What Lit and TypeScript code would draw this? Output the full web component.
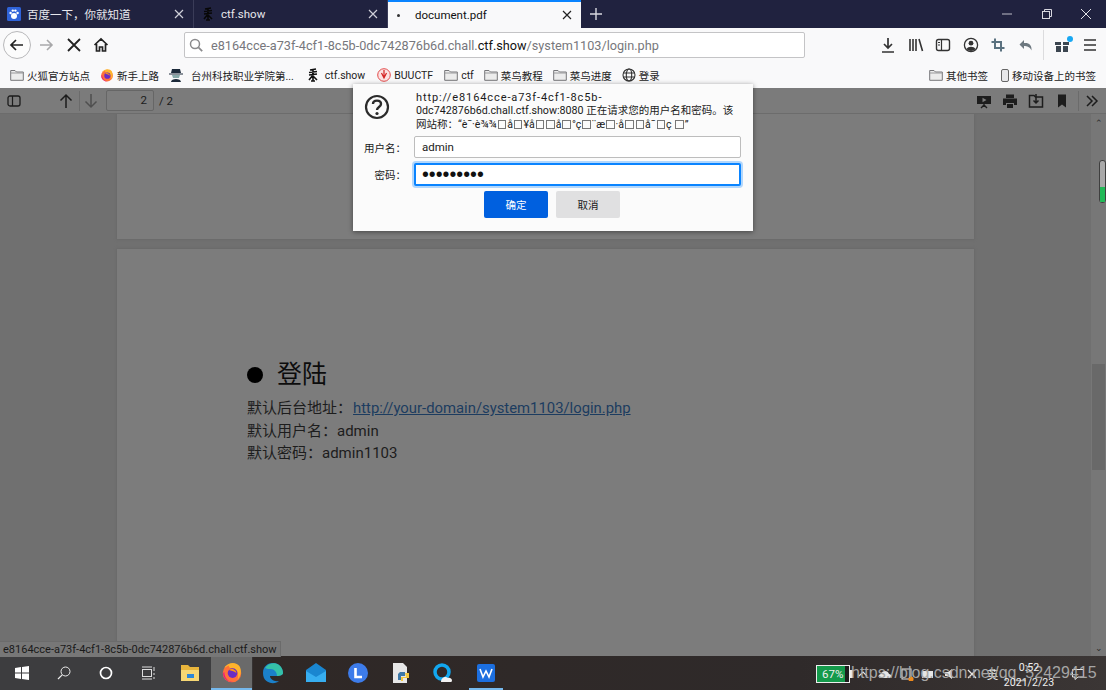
import { LitElement, html, css, svg } from "lit";
import { customElement } from "lit/decorators.js";

const ctfIcon = html`<svg class="ic14" viewBox="0 0 14 14"><path d="M4 2 L10 1 M3 4.5 L11 3.5 M3 7 L11 6 M7 1 V13 M7 7 L3 12 M7 8 L11 12 M5 13 L9 13" stroke="#111" stroke-width="1.6" fill="none"/></svg>`;

const folder = html`<svg class="ic14" viewBox="0 0 14 14"><path d="M.7 2.5 H5 L6.5 4 H13.3 V12.3 H.7 Z" fill="#ececec" stroke="#77777a"/><path d="M1 5 H13" stroke="#9a9a9c"/></svg>`;

const firefox = (size: string) => html`<svg class=${size} viewBox="0 0 20 20">
  <circle cx="10" cy="11" r="8.4" fill="#ff7139"/>
  <path d="M3 6 C6 1 14 0 17 5 C19 9 18 14 15 17 C17 11 14 7 11 7 C9 7 7 6 7 4 C5 5 4 6 3 6Z" fill="#ffb32c"/>
  <path d="M2 11 C2 17 7 19.5 11 19.2 C6 19 3 15 3 10Z" fill="#e31587"/>
  <circle cx="10.5" cy="11" r="4.4" fill="#6a2dc2"/>
  <path d="M7 8 C10 6 14 8 14 11 C12 9 9 9 7 8Z" fill="#ff980e"/>
</svg>`;

const globe = html`<svg class="ic14" viewBox="0 0 14 14" fill="none" stroke="#333" stroke-width="1.1"><circle cx="7" cy="7" r="6"/><ellipse cx="7" cy="7" rx="2.7" ry="6"/><path d="M1.3 5 H12.7 M1.3 9 H12.7"/></svg>`;

const closeIcon = (colour: string) => html`<svg class="ic14" viewBox="0 0 14 14"><path d="M3 3 L11 11 M11 3 L3 11" stroke=${colour} stroke-width="1.2"/></svg>`;

const bookmarks = [
  { icon: folder, text: "火狐官方站点", cls: "" },
  { icon: firefox("ic14"), text: "新手上路", cls: "" },
  {
    icon: html`<svg class="ic14" viewBox="0 0 14 14"><path d="M3 1 H11 L12 5 H2 Z M0 5.5 H14 V6.5 H0 Z" fill="#1c2a3a"/><path d="M3 7 H11 L10 10 H4 Z" fill="#8aa"/><path d="M2 14 C2 10 12 10 12 14 Z" fill="#1c2a3a"/></svg>`,
    text: "台州科技职业学院第...",
    cls: "spy",
  },
  { icon: ctfIcon, text: "ctf.show", cls: "ctf" },
  {
    icon: html`<svg class="ic14" viewBox="0 0 14 14"><circle cx="7" cy="7" r="6.3" fill="#fbe3e3" stroke="#e34b4b"/><path d="M7 2 V9 M4.5 5 L7 10 L9.5 5" stroke="#d42222" stroke-width="1.2" fill="none"/></svg>`,
    text: "BUUCTF",
    cls: "buu",
  },
  { icon: folder, text: "ctf", cls: "" },
  { icon: folder, text: "菜鸟教程", cls: "" },
  { icon: folder, text: "菜鸟进度", cls: "" },
  { icon: globe, text: "登录", cls: "" },
];

const navRight = [
  svg`<path d="M9 2 V12 M5 8 L9 12 L13 8 M3 16 H15" stroke="#333" stroke-width="1.7" fill="none"/>`,
  svg`<path d="M3 3 V15 M6 3 V15 M9 3 V15 M12 3 L15.5 15" stroke="#333" stroke-width="1.6" fill="none"/>`,
  svg`<rect x="2.5" y="3.5" width="13" height="11" rx="2" stroke="#333" stroke-width="1.4" fill="none"/><path d="M7.5 3.5 V14.5 M4 6.5 H6 M4 9 H6" stroke="#333" stroke-width="1.2"/>`,
  svg`<circle cx="9" cy="9" r="6.6" stroke="#333" stroke-width="1.3" fill="none"/><circle cx="9" cy="7.2" r="2.4" fill="#333"/><path d="M4.6 13 C6 10 12 10 13.4 13 C12 15.5 6 15.5 4.6 13Z" fill="#333"/>`,
  svg`<path d="M6 2.5 V12 H15.5 M2.5 6 H12 V15.5" stroke="#5b7280" stroke-width="2" fill="none"/>`,
  svg`<path d="M7 4 L2.5 8.5 L7 13 V10 C10 10 13 11 14.5 14.5 C15 9 12 6.5 7 7Z" fill="#6d7880"/>`,
];

const pdfRight = [
  svg`<path d="M1 3 H15 V11 H1 Z" fill="#1d1d1d"/><path d="M6.5 4.7 L10.5 7 L6.5 9.3Z" fill="#7c7c7c"/><path d="M8 11 V14 M5 15 L8 12 L11 15" stroke="#1d1d1d" stroke-width="1.4" fill="none"/>`,
  svg`<path d="M4 1.5 H12 V5 H4 Z M1 5.5 H15 V12 H12 V10 H4 V12 H1 Z M5 11 H11 V15 H5 Z" fill="#1d1d1d"/>`,
  svg`<path d="M1.5 2.5 H6 L7.5 4 H14.5 V14 H1.5 Z" stroke="#1d1d1d" stroke-width="1.5" fill="none"/><path d="M8 1 V10 M5.5 7.5 L8 10 L10.5 7.5" stroke="#1d1d1d" stroke-width="1.5" fill="none"/>`,
  svg`<path d="M4 1.5 H12 V14.5 L8 11.5 L4 14.5Z" fill="#1d1d1d"/>`,
];

const garbled = "“è¯·è¾¾|å|¥å||å|°ç|¨æ|·å||å¯|ç |”".split("|");

@customElement("app-root")
export class AppRoot extends LitElement {
  static styles = css`
    :host {
      display: block;
      width: 1106px;
      height: 692px;
      background: #fff;
      font-family: Roboto, "Noto Sans CJK SC", sans-serif;
      color: #111;
      overflow: hidden;
    }
    .root {
      position: relative;
      display: flex;
      flex-direction: column;
      height: 692px;
    }
    svg {
      display: block;
      flex: none;
    }
    .ic14 {
      width: 14px;
      height: 14px;
    }
    .ic16 {
      width: 16px;
      height: 16px;
    }
    .ic18 {
      width: 18px;
      height: 18px;
    }

    .tabs {
      display: flex;
      align-items: stretch;
      height: 28px;
      background: #20223f;
      color: #e6e6ec;
      font-size: 11.5px;
    }
    .tab {
      display: flex;
      align-items: center;
      width: 194px;
      padding: 0 7px 0 7px;
      box-sizing: border-box;
      border-right: 1px solid #3a3c58;
      gap: 6px;
    }
    .tab .name {
      flex: 1;
    }
    .tab.active {
      width: 193px;
      background: #f9f9fa;
      color: #111;
      border-right: none;
      border-top: 2px solid #0a84ff;
      padding-left: 9px;
      gap: 15px;
    }
    .tab.active .dot {
      width: 3px;
      height: 3px;
      border-radius: 50%;
      background: #333;
    }
    .tab.active svg {
      margin-left: -9px;
    }
    .tab-ctf {
      filter: brightness(0.4);
    }
    .new-tab {
      width: 30px;
      display: grid;
      place-items: center;
    }
    .win {
      margin-left: auto;
      display: flex;
    }
    .win div {
      width: 39.5px;
      display: grid;
      place-items: center;
    }

    .nav {
      display: flex;
      align-items: center;
      height: 34px;
      background: #f9f9fa;
      padding-left: 3px;
      box-sizing: border-box;
    }
    .back {
      width: 28px;
      height: 28px;
      border: 1px solid #b8b8ba;
      border-radius: 50%;
      box-sizing: border-box;
      display: grid;
      place-items: center;
      background: #fcfcfc;
    }
    .nav-btns {
      display: flex;
      align-items: center;
      margin-left: 6px;
      gap: 9.5px;
    }
    .url {
      display: flex;
      align-items: center;
      gap: 8px;
      width: 621px;
      height: 26px;
      margin-left: 74px;
      padding-left: 4px;
      box-sizing: border-box;
      background: #fff;
      border: 1px solid #c4c4c6;
      border-radius: 2px;
      font-size: 12.7px;
      color: #77777c;
      white-space: nowrap;
    }
    .url b {
      font-weight: 400;
      color: #111;
    }
    .nav-right {
      display: flex;
      align-items: center;
      margin-left: 74px;
      gap: 9.6px;
    }
    .nav-sep {
      width: 1px;
      height: 30px;
      background: #dcdcde;
      margin-left: -2px;
    }
    .gift {
      position: relative;
    }
    .gift i {
      position: absolute;
      top: 0;
      right: -2px;
      width: 6px;
      height: 6px;
      border-radius: 50%;
      background: #19a8f2;
    }

    .marks {
      display: flex;
      align-items: center;
      height: 26px;
      background: #f9f9fa;
      padding: 0 10px 0 10px;
      box-sizing: border-box;
      font-size: 10.5px;
      white-space: nowrap;
      color: #222;
    }
    .mark {
      display: flex;
      align-items: center;
      gap: 3px;
      margin-right: 10px;
    }
    .mark.spy {
      gap: 8px;
      margin-right: 12px;
    }
    .mark.ctf {
      gap: 5px;
      margin-right: 12px;
    }
    .mark.buu {
      margin-right: 11px;
    }
    .marks .spacer {
      flex: 1;
    }
    .marks .mark:last-child {
      margin-right: 0;
    }
    .mark.others {
      margin-right: 13px;
    }
    .phone {
      width: 8px;
      height: 13px;
      border: 1px solid #666;
      border-radius: 2px;
      box-sizing: border-box;
      background: #e8e8ea;
    }

    .toolbar {
      display: flex;
      align-items: center;
      height: 26px;
      background: #7b7b7b;
      padding-left: 7px;
      box-sizing: border-box;
      font-size: 11.5px;
      color: #1c1c1c;
      border-bottom: 1px solid #6c6c6c;
    }
    .toolbar .arrows {
      display: flex;
      align-items: center;
      margin-left: 36px;
    }
    .tb-sep {
      width: 1px;
      height: 20px;
      background: #6b6b6b;
      margin: 0 2px 0 4px;
    }
    .page-input {
      width: 48px;
      height: 21px;
      margin: 0 5px 0 6px;
      box-sizing: border-box;
      border: 1px solid #666;
      border-radius: 2px;
      background: #7d7d7d;
      text-align: right;
      padding-right: 6px;
      line-height: 19px;
    }
    .tb-right {
      margin-left: auto;
      display: flex;
      align-items: center;
      gap: 10px;
      padding-right: 7px;
    }
    .tb-right .tb-sep {
      margin: 0 -4px 0 -2px;
    }

    .doc {
      flex: 1;
      display: flex;
      min-height: 0;
      background: #707070;
      overflow: hidden;
    }
    .pages {
      width: 1091px;
      display: flex;
      flex-direction: column;
      align-items: center;
      gap: 10px;
    }
    .page {
      flex: none;
      width: 857px;
      background: #7c7c7c;
      box-shadow: 0 0 3px #646464;
    }
    .page.first {
      height: 125px;
    }
    .page.second {
      height: 500px;
      padding: 108px 0 0 130px;
      box-sizing: border-box;
      font-size: 15px;
      line-height: 22.5px;
      color: #1d1d1d;
    }
    .page h2 {
      display: flex;
      align-items: center;
      gap: 14px;
      height: 36px;
      margin: 0 0 4px;
      font-size: 25px;
      font-weight: 400;
      color: #0c0c0c;
    }
    .page h2 i {
      width: 16px;
      height: 16px;
      border-radius: 50%;
      background: #000;
    }
    .page a {
      margin-left: 1px;
      font-size: 14.85px;
      color: #1c3c60;
      text-decoration: underline;
    }
    .scroll {
      flex: 1;
      background: #777;
      display: flex;
      flex-direction: column;
      align-items: center;
    }
    .scroll .up {
      margin-top: 4px;
      font-size: 9px;
      line-height: 10px;
      color: #2c2c2c;
    }
    .thumb {
      width: 13px;
      height: 106px;
      margin-top: 236px;
      background: #696969;
    }
    .scroll .down {
      margin-top: auto;
      margin-bottom: 3px;
      font-size: 9px;
      line-height: 10px;
      color: #2c2c2c;
    }
    .meter {
      position: absolute;
      left: 1099px;
      top: 160px;
      width: 7px;
      height: 43px;
      box-sizing: border-box;
      border: 1px solid #3f3f3f;
      border-radius: 3px;
      background: #a9a9a9;
      display: flex;
      align-items: flex-end;
    }
    .meter i {
      width: 100%;
      height: 15px;
      background: #22b957;
    }

    .dialog {
      position: absolute;
      left: 353px;
      top: 84px;
      width: 400px;
      height: 147px;
      box-sizing: border-box;
      padding: 7px 12px 0 11px;
      background: #fbfbfb;
      box-shadow: 0 1px 5px rgba(0, 0, 0, 0.45);
      font-size: 10.5px;
      color: #1a1a1a;
    }
    .head {
      display: flex;
      gap: 26px;
    }
    .head svg {
      margin-top: 3px;
    }
    .msg {
      line-height: 13.4px;
      height: 42px;
      white-space: nowrap;
      font-size: 10.5px;
    }
    .msg .latin {
      font-size: 10.7px;
    }
    .msg .latin.first {
      font-size: 11px;
      letter-spacing: 0.9px;
    }
    .hex {
      display: inline-block;
      width: 8.5px;
      height: 9px;
      margin: 0 1px;
      border: 1px solid #777;
      box-sizing: border-box;
      vertical-align: -1px;
    }
    .form {
      display: grid;
      grid-template-columns: 36px 327px;
      column-gap: 14px;
      row-gap: 5px;
      align-items: center;
      margin-top: 3px;
    }
    .form label {
      margin-right: -6px;
      text-align: right;
      white-space: nowrap;
    }
    .field {
      height: 22px;
      box-sizing: border-box;
      border: 1px solid #bdbdbd;
      border-radius: 2px;
      background: #fff;
      padding: 0 7px;
      line-height: 20px;
      font-size: 11.5px;
    }
    .field.focus {
      height: 23px;
      border: 2px solid #0a84ff;
      box-shadow: 0 0 0 2px rgba(10, 132, 255, 0.3);
      padding: 0 6px;
      font-family: "Liberation Sans", sans-serif;
      font-size: 19.6px;
      line-height: 18px;
      color: #111;
    }
    .actions {
      display: flex;
      gap: 8px;
      margin: 5px 0 0 120px;
    }
    .actions div {
      width: 64px;
      height: 27px;
      display: grid;
      place-items: center;
      border-radius: 2px;
      background: #e0e0e1;
    }
    .actions .ok {
      background: #0060df;
      color: #fff;
    }

    .status {
      position: absolute;
      left: 0;
      top: 641px;
      height: 15px;
      padding: 0 3px;
      background: #777;
      border: 1px solid #6b6b6b;
      border-width: 1px 1px 0 0;
      font-size: 11px;
      line-height: 15px;
      color: #1a1a1a;
      white-space: nowrap;
    }

    .taskbar {
      flex: none;
      display: flex;
      align-items: stretch;
      height: 34px;
      margin-bottom: 2px;
      padding-left: 1px;
      background: linear-gradient(90deg, #3d3d3f 0, #3d3d3f 252px, #2f2826 253px, #2f2a2a 800px, #3b3635 100%);
    }
    .slot {
      position: relative;
      width: 42px;
      display: grid;
      place-items: center;
      box-sizing: border-box;
    }
    .slot.app {
      width: 42.5px;
    }
    .slot.on {
      width: 41px;
      background: #6a6a6a;
      border-bottom: 2px solid #76b9ed;
    }
    .slot.open::after {
      content: "";
      position: absolute;
      left: 4px;
      right: 4px;
      bottom: 0;
      height: 2px;
      background: #76b9ed;
    }
    .ic22 {
      width: 22px;
      height: 22px;
    }

    .battery {
      position: absolute;
      left: 816px;
      top: 665px;
      width: 34px;
      height: 18px;
      box-sizing: border-box;
      border: 1px solid #eee;
      display: flex;
      background: #1d1d1d;
      color: #eee;
      font-size: 11.5px;
      line-height: 16px;
    }
    .battery span {
      width: 23px;
      background: #149a4b;
      padding-left: 5px;
      white-space: nowrap;
    }
    .battery::after {
      content: "";
      position: absolute;
      left: 32px;
      top: 4px;
      width: 4px;
      height: 8px;
      background: #eee;
    }
    .tray {
      position: absolute;
      left: 856px;
      top: 665px;
      display: flex;
      align-items: center;
      height: 18px;
      gap: 7.8px;
      color: #e6e6e6;
      font-size: 11.5px;
    }
    .notif {
      position: absolute;
      left: 1071px;
      top: 667px;
    }
    .mark-url {
      position: absolute;
      left: 851px;
      top: 662px;
      font-family: "Liberation Sans", sans-serif;
      font-size: 16px;
      line-height: 22px;
      color: #a5a5a5;
      white-space: nowrap;
    }
    .clock {
      position: absolute;
      left: 1000px;
      top: 660px;
      width: 58px;
      text-align: center;
      font-size: 10.6px;
      line-height: 15px;
      color: #eee;
      white-space: nowrap;
    }
  `;

  render() {
    return html`<div class="root">
      <div class="tabs">
        <div class="tab">
          <svg class="ic14" viewBox="0 0 14 14"><rect width="14" height="14" rx="1.5" fill="#2f63d9"/><circle cx="7" cy="9" r="3" fill="#fff"/><circle cx="3.6" cy="6" r="1.2" fill="#fff"/><circle cx="5.8" cy="3.6" r="1.2" fill="#fff"/><circle cx="8.4" cy="3.6" r="1.2" fill="#fff"/><circle cx="10.6" cy="6" r="1.2" fill="#fff"/></svg>
          <span class="name">百度一下，你就知道</span>
          ${closeIcon("#cfcfd8")}
        </div>
        <div class="tab">
          <span class="tab-ctf">${ctfIcon}</span>
          <span class="name">ctf.show</span>
          ${closeIcon("#cfcfd8")}
        </div>
        <div class="tab active">
          <span class="dot"></span>
          <span class="name">document.pdf</span>
          ${closeIcon("#222")}
        </div>
        <div class="new-tab">
          <svg class="ic14" viewBox="0 0 14 14"><path d="M7 1 V13 M1 7 H13" stroke="#d8d8e0" stroke-width="1.4"/></svg>
        </div>
        <div class="win">
          <div><svg class="ic14" viewBox="0 0 14 14"><path d="M2 7 H12" stroke="#bdbdc8"/></svg></div>
          <div><svg class="ic14" viewBox="0 0 14 14" fill="none" stroke="#d8d8e0"><rect x="2.5" y="4.5" width="7" height="7"/><path d="M4.5 4.5 V2.5 H11.5 V9.5 H9.5"/></svg></div>
          <div><svg class="ic14" viewBox="0 0 14 14"><path d="M2 2 L12 12 M12 2 L2 12" stroke="#e2e2e8"/></svg></div>
        </div>
      </div>

      <div class="nav">
        <div class="back"><svg class="ic18" viewBox="0 0 18 18"><path d="M15 9 H3 M8 4 L3 9 L8 14" stroke="#222" stroke-width="1.7" fill="none"/></svg></div>
        <div class="nav-btns">
          <svg class="ic18" viewBox="0 0 18 18"><path d="M3 9 H15 M10 4 L15 9 L10 14" stroke="#a8a8aa" stroke-width="1.6" fill="none"/></svg>
          <svg class="ic18" viewBox="0 0 18 18"><path d="M3 3 L15 15 M15 3 L3 15" stroke="#222" stroke-width="1.8"/></svg>
          <svg class="ic18" viewBox="0 0 18 18"><path d="M2.5 9 L9 3 L15.5 9 M4.5 8 V15 H7.5 V11 H10.5 V15 H13.5 V8" stroke="#222" stroke-width="1.7" fill="none"/></svg>
        </div>
        <div class="url">
          <svg class="ic14" viewBox="0 0 14 14"><circle cx="6" cy="6" r="4.5" stroke="#8a8a8c" stroke-width="1.5" fill="none"/><path d="M9.4 9.4 L13.2 13.2" stroke="#8a8a8c" stroke-width="1.7"/></svg>
          <span>e8164cce-a73f-4cf1-8c5b-0dc742876b6d.chall.<b>ctf.show</b>/system1103/login.php</span>
        </div>
        <div class="nav-right">
          ${navRight.map((p) => html`<svg class="ic18" viewBox="0 0 18 18">${p}</svg>`)}
          <div class="nav-sep"></div>
          <div class="gift">
            <svg class="ic18" viewBox="0 0 18 18"><path d="M2 6 H8 V9 H2 Z M10 6 H16 V9 H10 Z M3 10 H8 V16 H3 Z M10 10 H15 V16 H10 Z" fill="#3c4650"/></svg>
            <i></i>
          </div>
          <svg class="ic18" viewBox="0 0 18 18"><path d="M3 4 H15 M3 9 H15 M3 14 H15" stroke="#333" stroke-width="1.7"/></svg>
        </div>
      </div>

      <div class="marks">
        ${bookmarks.map((b) => html`<div class="mark ${b.cls}">${b.icon}<span>${b.text}</span></div>`)}
        <div class="spacer"></div>
        <div class="mark others">${folder}<span>其他书签</span></div>
        <div class="mark"><div class="phone"></div><span>移动设备上的书签</span></div>
      </div>

      <div class="toolbar">
        <svg class="ic14" viewBox="0 0 14 14"><rect x="1" y="2" width="12" height="10" rx="2" stroke="#1c1c1c" stroke-width="1.3" fill="none"/><path d="M5.5 2 V12" stroke="#1c1c1c" stroke-width="1.2"/></svg>
        <div class="arrows">
          <svg class="ic18" viewBox="0 0 18 18"><path d="M9 16 V3 M3.5 8.5 L9 3 L14.5 8.5" stroke="#1c1c1c" stroke-width="1.5" fill="none"/></svg>
          <div class="tb-sep"></div>
          <svg class="ic18" viewBox="0 0 18 18"><path d="M9 2 V15 M3.5 9.5 L9 15 L14.5 9.5" stroke="#4f4f4f" stroke-width="1.5" fill="none"/></svg>
        </div>
        <div class="page-input">2</div>
        <span>/ 2</span>
        <div class="tb-right">
          ${pdfRight.map((p) => html`<svg class="ic16" viewBox="0 0 16 16">${p}</svg>`)}
          <div class="tb-sep"></div>
          <svg class="ic14" viewBox="0 0 14 14"><path d="M2 2 L7 7 L2 12 M7 2 L12 7 L7 12" stroke="#1c1c1c" stroke-width="1.5" fill="none"/></svg>
        </div>
      </div>

      <div class="doc">
        <div class="pages">
          <div class="page first"></div>
          <div class="page second">
            <h2><i></i>登陆</h2>
            <div>默认后台地址：<a>http://your-domain/system1103/login.php</a></div>
            <div>默认用户名：admin</div>
            <div>默认密码：admin1103</div>
          </div>
        </div>
        <div class="scroll">
          <div class="up">⌃</div>
          <div class="thumb"></div>
          <div class="down">⌄</div>
        </div>
      </div>
      <div class="meter"><i></i></div>

      <div class="taskbar">
        <div class="slot"><svg class="ic14" viewBox="0 0 14 14"><path d="M0 2 L6 1.1 V6.6 H0 Z M7 1 L14 0 V6.6 H7 Z M0 7.4 H6 V12.9 L0 12 Z M7 7.4 H14 V14 L7 13 Z" fill="#fff"/></svg></div>
        <div class="slot"><svg class="ic14" viewBox="0 0 14 14"><circle cx="8.5" cy="5.5" r="4.5" stroke="#eee" fill="none"/><path d="M5.2 8.8 L1 13" stroke="#eee" stroke-width="1.2"/></svg></div>
        <div class="slot"><svg class="ic14" viewBox="0 0 14 14"><circle cx="7" cy="7" r="5.5" stroke="#fff" stroke-width="1.7" fill="none"/></svg></div>
        <div class="slot"><svg class="ic14" viewBox="0 0 14 14" fill="none" stroke="#ddd"><rect x="1.5" y="3.5" width="9" height="7"/><path d="M1 1 H11 M1 13 H11 M13 1 V5 M13 7 V9 M13 11 V13"/></svg></div>
        <div class="slot"><svg class="ic22" viewBox="0 0 22 22"><path d="M2 3 H9 L11 5 H20 V18 H2 Z" fill="#e8b53c"/><rect x="2" y="8" width="18" height="11" fill="#f7d774"/><rect x="8" y="12" width="7" height="4" fill="#2c86d9"/></svg></div>
        <div class="slot on">${firefox("ic22")}</div>
        <div class="slot app"><svg class="ic22" viewBox="0 0 22 22"><path d="M1 11 C1 4 6 1 11 1 C17 1 21 6 21 11 C21 13 18 14 15 14 L8 14 C8 17 12 20 17 19 C13 23 1 22 1 11Z" fill="#1b80c9"/><path d="M3 6 C6 1 13 0 17 3 C20 5 21 9 21 11 C21 13 18 14 15 14 C15 10 12 7 9 7 C7 7 5 7 3 6Z" fill="#35c1a8"/></svg></div>
        <div class="slot app"><svg class="ic22" viewBox="0 0 22 22"><path d="M1 8 L11 1 L21 8 V20 H1 Z" fill="#1a86d0"/><path d="M1 9 L11 15 L21 9 V20 H1 Z" fill="#37aef0"/></svg></div>
        <div class="slot app"><svg class="ic22" viewBox="0 0 22 22"><circle cx="11" cy="11" r="10" fill="#3d7cea"/><path d="M8.5 6 V15 H15" stroke="#fff" stroke-width="2.6" fill="none"/></svg></div>
        <div class="slot app"><svg class="ic22" viewBox="0 0 22 22"><path d="M3 1 H13 L17 5 V21 H3 Z" fill="#e7e7e7"/><path d="M10 10 H15 V14 H11 V18 H8 V12 Z" fill="#3d78a8"/><path d="M15 11 H19 V16 H13 V19 H11 V15 H16Z" fill="#f3c73f"/></svg></div>
        <div class="slot app"><svg class="ic22" viewBox="0 0 22 22"><circle cx="10" cy="10" r="7" stroke="#12a7ef" stroke-width="3.5" fill="none"/><path d="M9 20 C9 15 14 14 16 16 C20 15 21 20 19 20 Z" fill="#f2f2f2"/></svg></div>
        <div class="slot app open"><svg class="ic22" viewBox="0 0 22 22"><rect x="2" y="2" width="18" height="18" rx="2" fill="#1c6fe0"/><path d="M5 7 L8 15 L11 9 L14 15 L17 7" stroke="#fff" stroke-width="1.6" fill="none"/></svg></div>
      </div>

      <div class="status">e8164cce-a73f-4cf1-8c5b-0dc742876b6d.chall.ctf.show</div>

      <div class="dialog">
        <div class="head">
          <svg width="26" height="26" viewBox="0 0 26 26"><circle cx="13" cy="13" r="11" stroke="#2b2b2b" stroke-width="2.2" fill="none"/><path d="M9 10 C9 5.5 17 5.5 17 10 C17 13 13 13 13 16" stroke="#2b2b2b" stroke-width="2.4" fill="none"/><circle cx="13" cy="19.5" r="1.6" fill="#2b2b2b"/></svg>
          <div class="msg">
            <span class="latin first">http://e8164cce-a73f-4cf1-8c5b-</span><br /><span class="latin">0dc742876b6d.chall.ctf.show:8080</span> 正在请求您的用户名和密码。该<br />网站称：${garbled.map(
              (s, i) => html`${i ? html`<span class="hex"></span>` : ""}${s}`
            )}
          </div>
        </div>
        <div class="form">
          <label>用户名：</label>
          <div class="field">admin</div>
          <label>密码：</label>
          <div class="field focus">•••••••••</div>
        </div>
        <div class="actions">
          <div class="ok">确定</div>
          <div>取消</div>
        </div>
      </div>

      <div class="tray">
        <svg class="ic14" viewBox="0 0 14 14"><path d="M3 9 L7 5 L11 9" stroke="#e6e6e6" stroke-width="1.2" fill="none"/></svg>
        <svg class="ic14" viewBox="0 0 14 14"><path d="M3 11 C0 11 0 7 3 7 C4 3 10 3 11 7 C14 7 14 11 11 11Z" fill="#e6e6e6"/></svg>
        <svg class="ic14" viewBox="0 0 14 14"><rect x="2" y="2" width="9" height="10" stroke="#e6e6e6" fill="none"/><circle cx="11" cy="12" r="2.6" fill="#f08a1c"/></svg>
        <svg class="ic14" viewBox="0 0 14 14"><rect x="1" y="4" width="11" height="7" fill="#e6e6e6"/></svg>
        <svg class="ic14" viewBox="0 0 14 14"><path d="M2 5 H5 L9 2 V12 L5 9 H2 Z" fill="#e6e6e6"/></svg>
        <svg class="ic14" viewBox="0 0 14 14"><path d="M3 3 L11 11 M11 3 L3 11" stroke="#e6e6e6" stroke-width="1.3"/></svg>
        <span>英</span>
      </div>
      <svg class="notif ic14" viewBox="0 0 14 14"><path d="M1.5 2.5 H12.5 V10 H7 L4 12.5 V10 H1.5 Z" stroke="#e6e6e6" fill="none"/></svg>
      <div class="battery"><span>67%</span></div>
      <div class="mark-url">https://blog.csdn.net/qq_52429415</div>
      <div class="clock">0:52<br />2021/2/23</div>
    </div>`;
  }
}
